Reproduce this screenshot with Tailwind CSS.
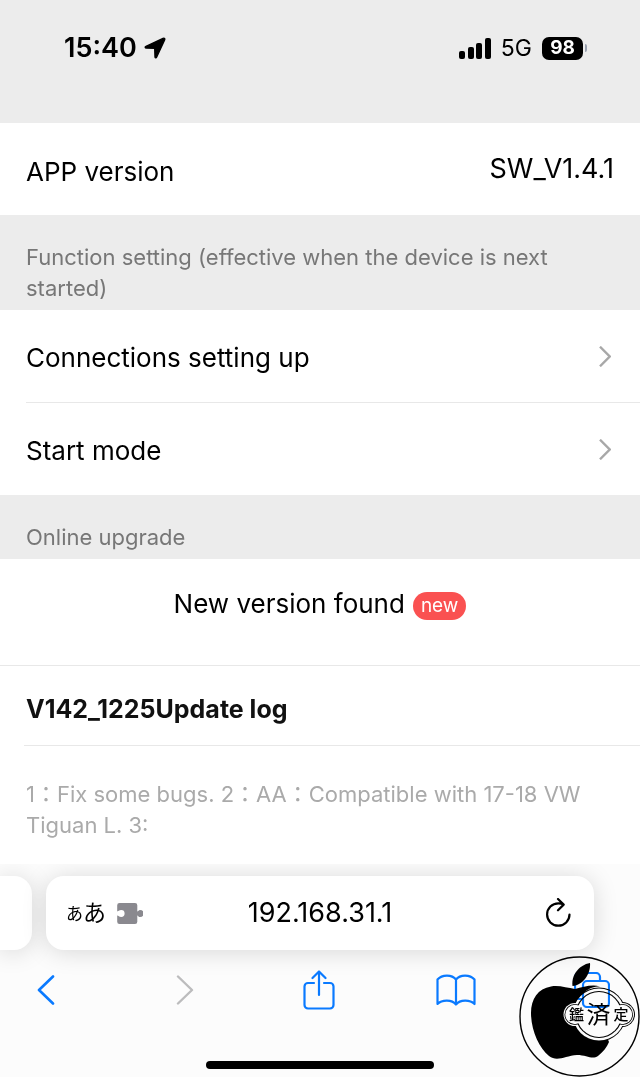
<!DOCTYPE html>
<html lang="en">

<head>
    <meta charset="UTF-8">
    <meta name="viewport" content="width=device-width, initial-scale=1.0">
    <title>Settings</title>
    <script src="https://cdn.jsdelivr.net/npm/@tailwindcss/browser@4"></script>
</head>

<body class="flex flex-col min-h-screen bg-[#ececec] font-['Inter','Noto_Sans_CJK_JP',sans-serif] text-black">

    <!-- Status bar -->
    <header class="flex items-start justify-between h-[123px] pt-8 pl-16 pr-[53px]">
        <div class="flex items-center gap-[7px] h-8">
            <span class="text-[27px] leading-8 font-semibold">15:40</span>
            <svg class="w-[22px] h-[22px]" viewBox="0 0 22 22">
                <path stroke="#000" stroke-width="1.4" stroke-linejoin="round" d="M20.600 1.400c.4.400.3.900 0 1.600L12.700 20c-.6 1.300-1.700 1-1.700-.3L10.700 11.300 2.300 11C1 11 .7 9.900 2 9.300L19 1.400c.7-.3 1.200-.4 1.600 0z" />
            </svg>
        </div>
        <div class="flex items-center h-8">
            <svg class="w-8 h-[21px]" viewBox="0 0 32 21">
                <rect x="0" y="13" width="6" height="8" rx="2" />
                <rect x="9" y="9" width="6" height="12" rx="2" />
                <rect x="17" y="5" width="6" height="16" rx="2" />
                <rect x="26" y="0" width="6" height="21" rx="2" />
            </svg>
            <span class="ml-[10px] text-[23px]">5G</span>
            <span class="flex items-center justify-center ml-[10px] w-[41px] h-[23px] rounded-[7px] bg-black text-white text-[19px] font-bold">98</span>
            <span class="ml-0.5 w-0.5 h-2 rounded-r-full bg-gray-400"></span>
        </div>
    </header>

    <main class="grow">
        <div class="flex items-center justify-between h-[92px] px-[26px] bg-white text-[26px]">
            <span class="pt-1">APP version</span>
            <span class="text-[27px]">SW_V1.4.1</span>
        </div>

        <h2 class="px-[26px] pt-[27px] pb-1.5 text-[22px] leading-[31px] text-[#777]">
            Function setting (effective when the device is next started)
        </h2>
        <nav class="bg-white text-[26px]">
            <a class="flex items-center justify-between h-[93px] ml-[26px] pr-[29px] border-b border-[#e8e8e8]" href="#">
                <span class="pt-0.5">Connections setting up</span>
                <svg class="w-3 h-[21px]" viewBox="0 0 12 21" fill="none" stroke="#a8a8a8" stroke-width="2.4">
                    <path d="M1 .7l9.700 9.800L1 20.300" />
                </svg>
            </a>
            <a class="flex items-center justify-between h-[92px] ml-[26px] pr-[29px]" href="#">
                <span class="pt-0.5">Start mode</span>
                <svg class="w-3 h-[21px]" viewBox="0 0 12 21" fill="none" stroke="#a8a8a8" stroke-width="2.4">
                    <path d="M1 .7l9.700 9.800L1 20.300" />
                </svg>
            </a>
        </nav>

        <h2 class="px-[26px] pt-[27px] pb-1.5 text-[22px] leading-[31px] text-[#777]">Online upgrade</h2>
        <section class="bg-white">
            <div class="flex justify-center h-[107px] pt-7 border-b border-[#e8e8e8]">
                <span class="text-[26px] leading-[34px]">New version found</span>
                <span class="mt-[5px] ml-2 h-7 px-2 rounded-full bg-[#fa5151] text-[19px] leading-7 text-white">new</span>
            </div>
            <h3 class="ml-6 pl-0.5 pt-[26px] pb-[19px] text-[25px] leading-[34px] font-bold text-[#111] border-b border-[#e8e8e8]">V142_1225Update log</h3>
            <p class="px-[26px] pt-[33px] pb-[23px] text-[22px] leading-[31px] text-[#aaa]">1：Fix some bugs. 2：AA：Compatible with 17-18 VW Tiguan L. 3:</p>
        </section>
    </main>

    <!-- Browser bar -->
    <footer class="relative overflow-hidden bg-[#fcfcfc]">
        <div class="flex gap-[14px] pt-3 pr-[46px]">
            <div class="shrink-0 w-8 h-[74px] rounded-r-[18px] bg-white shadow-[0_2px_24px_rgba(0,0,0,0.15)]"></div>
            <div class="flex items-center grow min-w-0 h-[74px] px-5 rounded-[18px] bg-white shadow-[0_2px_24px_rgba(0,0,0,0.15)]">
                <button class="flex items-center shrink-0 w-[77px]" type="button" aria-label="Page menu">
                    <span class="pt-1 text-[17px]">あ</span><span class="text-[23px]">あ</span>
                    <svg class="ml-auto w-[26px] h-[21px]" viewBox="0 0 26 21">
                        <path fill="#8a898f" d="M2.500 0h15.500a2.300 2.300 0 0 1 2.300 2.300V8.500c1-.2 1.300-1.600 2.700-1.600a3.300 3.300 0 0 1 0 7.200c-1.400 0-1.700-1.300-2.700-1.600v6.200a2.300 2.300 0 0 1-2.300 2.300H2.500A2.300 2.300 0 0 1 .2 18.700v-6.200c1.400.2 1.700 1.400 4 1.400a3.400 3.400 0 0 0 0-6.800c-2.300 0-2.600 1.200-4 1.400V2.300A2.300 2.300 0 0 1 2.500 0z" />
                    </svg>
                </button>
                <input class="grow w-full min-w-0 text-center text-[27px] outline-none" type="text" value="192.168.31.1" aria-label="Address">
                <button class="flex justify-end shrink-0 w-[77px]" type="button" aria-label="Reload">
                    <svg class="w-8 h-[30px]" viewBox="0 0 32 30" fill="none" stroke="#000" stroke-width="2.200" stroke-linecap="round" stroke-linejoin="round">
                        <path d="M27.500 16.500A11.200 11.200 0 1 1 16.300 5.300c2 0 3.700.3 5 1M16 1l5.700 5.600L16 12.300" />
                    </svg>
                </button>
            </div>
        </div>

        <div class="flex items-center justify-between h-20 pl-[30px] pr-8 text-[#0a7aff]">
            <button class="flex justify-center w-8" type="button" aria-label="Back">
                <svg class="w-[18px] h-[30px]" viewBox="0 0 18 30" fill="none" stroke="currentColor" stroke-width="2.600" stroke-linecap="round" stroke-linejoin="round">
                    <path d="M16 1.500L2 15l14 13.500" />
                </svg>
            </button>
            <button class="flex justify-center w-8 pl-1" type="button" aria-label="Forward">
                <svg class="w-[18px] h-[30px]" viewBox="0 0 18 30" fill="none" stroke="#bcbcbd" stroke-width="2.400" stroke-linecap="round" stroke-linejoin="round">
                    <path d="M2 1.500L16 15 2 28.500" />
                </svg>
            </button>
            <button class="flex justify-center w-8" type="button" aria-label="Share">
                <svg class="w-8 h-10 shrink-0" viewBox="0 0 32 40" fill="none" stroke="currentColor" stroke-width="2.200" stroke-linecap="round" stroke-linejoin="round">
                    <path d="M11 13H5a3.500 3.500 0 0 0-3.500 3.500v18.500A3.500 3.500 0 0 0 5 38.500h22a3.500 3.500 0 0 0 3.500-3.500V16.500A3.500 3.500 0 0 0 27 13h-6M16 25V1.500M9.500 8L16 1.500 22.500 8" />
                </svg>
            </button>
            <button class="flex justify-center w-8" type="button" aria-label="Bookmarks">
                <svg class="w-10 h-8 shrink-0" viewBox="0 0 40 32" fill="none" stroke="currentColor" stroke-width="2.200" stroke-linecap="round" stroke-linejoin="round">
                    <path d="M20 5.500C16 .2 6 .2 1.500 5.500V30c4.500-4.500 14.500-4.500 18.500 0.500C24 25.500 34 25.500 38.500 30V5.500C34 .2 24 .2 20 5.500zM20 5.500v25" />
                </svg>
            </button>
            <button class="flex justify-center w-8" type="button" aria-label="Tabs">
                <svg class="w-9 h-9 shrink-0" viewBox="0 0 36 36" fill="none" stroke="currentColor" stroke-width="2.200">
                    <rect x="9" y="9" width="26" height="26" rx="4" />
                    <path d="M9 27H5a4 4 0 0 1-4-4V5a4 4 0 0 1 4-4h17a4 4 0 0 1 4 4v4" />
                </svg>
            </button>
        </div>
        <div class="mx-auto mt-[31px] mb-2 w-[228px] h-2 rounded-full bg-black"></div>

        <!-- Stamp -->
        <svg class="absolute right-0 bottom-0 w-[121px] h-[121px] mix-blend-multiply" viewBox="0 0 121 121">
            <circle cx="60.500" cy="60.500" r="59.500" fill="none" stroke="#000" stroke-width="1.400" />
            <path d="M71 7C60 9 52 19 53.500 30 64 29 72 18 71 7z" />
            <path d="M56 33C48 32 40 29 32 30.500 19 32.500 12 43 12 57c0 17 8 35 18 43 8 6 16 0 28-1 10 0 15 5 21 1 5-4 9-9 11-14L79 59 66 36c4-4 9-5.500 15-5.500C73 28 64 31 56 33z" />
            <!-- Badge outline -->
            <g>
                <circle cx="80" cy="58.500" r="27" />
                <circle cx="56" cy="58.500" r="12.500" />
                <circle cx="103.500" cy="58.500" r="12.500" />
            </g>
            <g fill="#fff">
                <circle cx="80" cy="58.500" r="26" />
                <circle cx="56" cy="58.500" r="11.500" />
                <circle cx="103.500" cy="58.500" r="11.500" />
            </g>
            <g>
                <circle cx="80" cy="58.500" r="23.500" />
                <circle cx="56" cy="58.500" r="10.500" />
                <circle cx="103.500" cy="58.500" r="10.500" />
            </g>
            <g fill="#fff">
                <circle cx="80" cy="58.500" r="22.400" />
                <circle cx="56" cy="58.500" r="9.700" />
                <circle cx="103.500" cy="58.500" r="9.700" />
            </g>
            <g class="font-['Noto_Sans_CJK_JP',sans-serif]" text-anchor="middle">
                <text x="57.500" y="64" font-size="15" font-weight="500">鑑</text>
                <text x="79.500" y="67" font-size="24">済</text>
                <text x="102" y="64" font-size="15" font-weight="500">定</text>
            </g>
        </svg>
    </footer>

</body>

</html>
